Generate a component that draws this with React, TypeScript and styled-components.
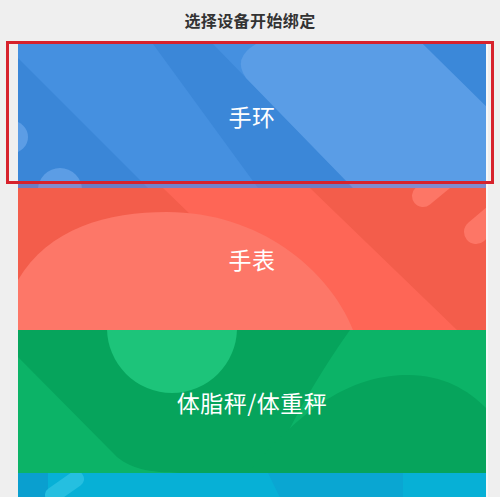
import React from 'react';
import styled, { createGlobalStyle } from 'styled-components';

const GlobalStyle = createGlobalStyle`
  html, body {
    margin: 0;
    padding: 0;
    background: #efefef;
    overflow: hidden;
  }
  body {
    font-family: "Noto Sans CJK SC", "Noto Sans", sans-serif;
  }
`;

const Page = styled.div`
  width: 500px;
  height: 497px;
  overflow: hidden;
  background: #efefef;
`;

const Header = styled.header`
  height: 39px;
  margin-bottom: 5px;
  display: flex;
  justify-content: center;
  align-items: center;
`;

const Title = styled.h1`
  margin: 0;
  font-size: 16px;
  font-weight: 700;
  color: #333333;
  letter-spacing: 0.4px;
`;

const List = styled.div`
  width: 468px;
  margin-left: 18px;
  display: flex;
  flex-direction: column;
  box-shadow: 2px 0 0 #f8f8f8;
`;

const CardWrap = styled.div`
  position: relative;
`;

const Card = styled.div<{ $bg: string; $h: number }>`
  position: relative;
  height: ${(p) => p.$h}px;
  background: ${(p) => p.$bg};
  overflow: hidden;
  display: flex;
  justify-content: center;
  align-items: center;
  cursor: pointer;
`;

const Decor = styled.svg`
  position: absolute;
  inset: 0;
  width: 100%;
  height: 100%;
`;

const Label = styled.span`
  position: relative;
  color: #ffffff;
  font-size: 23px;
  letter-spacing: 0.5px;
`;

const Tint = styled.div`
  position: absolute;
  left: 0;
  right: 0;
  bottom: 0;
  height: 5px;
  background: rgba(200, 110, 160, 0.35);
`;

const Selected = styled.div`
  position: absolute;
  top: -3px;
  left: -12px;
  right: -8px;
  bottom: 4px;
  border: 3px solid #d7222c;
  pointer-events: none;
`;

function BandDecor() {
  return (
    <Decor viewBox="0 0 468 144" preserveAspectRatio="none">
      <polygon points="0,14 130,144 0,144" fill="#3a86d7" />
      <polygon points="135,0 195,0 335,144 240,144" fill="#3b87d8" />
      <path d="M238,0 L405,0 L468,62 L468,144 L335,144 L228,34 Q214,14 238,0 Z" fill="#5a9de6" />
      <polygon points="405,0 468,0 468,62" fill="#3b88d9" />
      <circle cx="-6" cy="93" r="16" fill="#5c9de5" />
      <circle cx="42" cy="146" r="22" fill="#5c9de5" />
    </Decor>
  );
}

function WatchDecor() {
  return (
    <Decor viewBox="0 0 468 142" preserveAspectRatio="none">
      <polygon points="145,0 292,0 439,142 292,142" fill="#fe6656" />
      <path d="M0,92 C30,40 90,24 149,24 C240,24 310,80 335,142 L0,142 Z" fill="#fd7768" />
      <line x1="405" y1="8" x2="445" y2="-25" stroke="#fd7666" strokeWidth="22" strokeLinecap="round" />
      <line x1="458" y1="44" x2="510" y2="0" stroke="#fd7666" strokeWidth="24" strokeLinecap="round" />
    </Decor>
  );
}

function ScaleDecor() {
  return (
    <Decor viewBox="0 0 468 143" preserveAspectRatio="none">
      <path
        d="M0,0 L332,0 C300,45 268,100 252,143 L170,143 C135,143 115,140 99,127 L0,27 Z"
        fill="#06a45c"
      />
      <path d="M230,143 C290,70 340,45 390,45 C425,45 450,60 468,78 L468,143 Z" fill="#06a45c" />
      <circle cx="154" cy="-2" r="65" fill="#1dc47a" />
    </Decor>
  );
}

function OtherDecor() {
  return (
    <Decor viewBox="0 0 468 143" preserveAspectRatio="none">
      <rect x="0" y="0" width="30" height="143" fill="#0a9fcf" />
      <line x1="35" y1="22" x2="58" y2="6" stroke="#25bfe0" strokeWidth="16" strokeLinecap="round" />
      <polygon points="250,0 385,0 385,143 320,143" fill="#0aa6d2" />
    </Decor>
  );
}

const devices = [
  { name: '手环', bg: '#4590e0', h: 144, Art: BandDecor, selected: true },
  { name: '手表', bg: '#f35d4b', h: 142, Art: WatchDecor, selected: false },
  { name: '体脂秤/体重秤', bg: '#0cb367', h: 143, Art: ScaleDecor, selected: false },
  { name: '其他设备', bg: '#07b0d6', h: 143, Art: OtherDecor, selected: false },
];

export default function App() {
  return (
    <Page>
      <GlobalStyle />
      <Header>
        <Title>选择设备开始绑定</Title>
      </Header>
      <List>
        {devices.map(({ name, bg, h, Art, selected }) => (
          <CardWrap key={name}>
            <Card $bg={bg} $h={h}>
              <Art />
              {name !== '其他设备' && <Label>{name}</Label>}
              {selected && <Tint />}
            </Card>
            {selected && <Selected />}
          </CardWrap>
        ))}
      </List>
    </Page>
  );
}
